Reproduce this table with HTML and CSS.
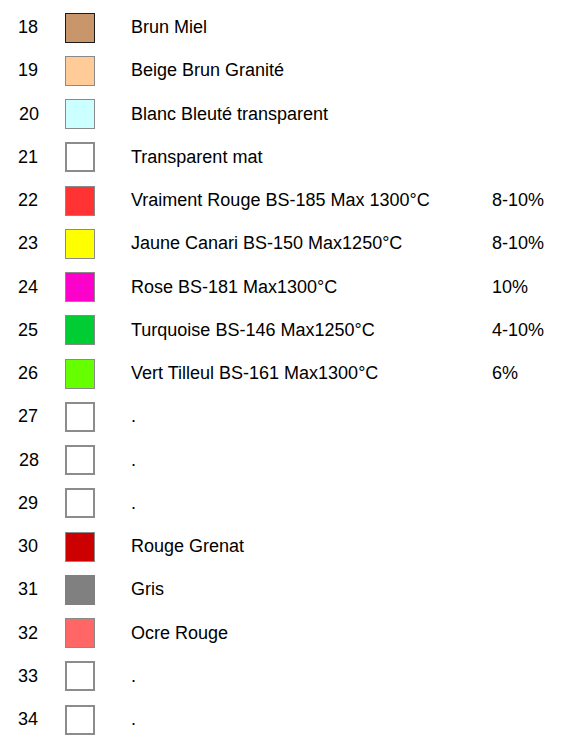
FILE: index.html
```html
<!DOCTYPE html>
<html lang="fr">
<head>
<meta charset="utf-8">
<title>Couleurs</title>
<link rel="stylesheet" href="styles.css">
</head>
<body>
<div class="list">
  <div class="row"><span class="num">18</span><span class="sw c18"></span><span class="name">Brun Miel</span><span class="pct"></span></div>
  <div class="row"><span class="num">19</span><span class="sw c19"></span><span class="name">Beige Brun Granité</span><span class="pct"></span></div>
  <div class="row"><span class="num n-r">20</span><span class="sw c20"></span><span class="name">Blanc Bleuté transparent</span><span class="pct"></span></div>
  <div class="row"><span class="num">21</span><span class="sw empty"></span><span class="name">Transparent mat</span><span class="pct"></span></div>
  <div class="row"><span class="num">22</span><span class="sw c22"></span><span class="name">Vraiment Rouge BS-185 Max 1300°C</span><span class="pct">8-10%</span></div>
  <div class="row"><span class="num">23</span><span class="sw c23"></span><span class="name">Jaune Canari BS-150 Max1250°C</span><span class="pct">8-10%</span></div>
  <div class="row"><span class="num">24</span><span class="sw c24"></span><span class="name">Rose BS-181 Max1300°C</span><span class="pct">10%</span></div>
  <div class="row"><span class="num">25</span><span class="sw c25"></span><span class="name">Turquoise BS-146 Max1250°C</span><span class="pct">4-10%</span></div>
  <div class="row"><span class="num">26</span><span class="sw c26"></span><span class="name">Vert Tilleul BS-161 Max1300°C</span><span class="pct">6%</span></div>
  <div class="row"><span class="num">27</span><span class="sw empty"></span><span class="name">.</span><span class="pct"></span></div>
  <div class="row"><span class="num n-r">28</span><span class="sw empty"></span><span class="name">.</span><span class="pct"></span></div>
  <div class="row"><span class="num">29</span><span class="sw empty"></span><span class="name">.</span><span class="pct"></span></div>
  <div class="row"><span class="num">30</span><span class="sw c30"></span><span class="name">Rouge Grenat</span><span class="pct"></span></div>
  <div class="row"><span class="num">31</span><span class="sw c31"></span><span class="name">Gris</span><span class="pct"></span></div>
  <div class="row"><span class="num">32</span><span class="sw c32"></span><span class="name">Ocre Rouge</span><span class="pct"></span></div>
  <div class="row"><span class="num">33</span><span class="sw empty"></span><span class="name">.</span><span class="pct"></span></div>
  <div class="row"><span class="num">34</span><span class="sw empty"></span><span class="name">.</span><span class="pct"></span></div>
</div>
</body>
</html>
```

FILE: styles.css
```css
html, body {
  margin: 0;
  padding: 0;
  background: #ffffff;
}

body {
  font-family: "Liberation Sans", Arial, sans-serif;
  font-size: 18px;
  color: #000000;
}

.list {
  padding: 6px 0 0 18px;
}

.row {
  display: grid;
  grid-template-columns: 47px 30px 397px auto;
  grid-template-rows: 43.25px;
  align-items: center;
}

.name {
  padding-left: 36px;
}

.n-r {
  padding-left: 1px;
}

.sw {
  box-sizing: border-box;
  width: 30px;
  height: 30px;
  border: 1px solid #8a8a8a;
}

.empty {
  background: #ffffff;
  border: 2px solid #8c8c8c;
}

.c18 { background: #c9966b; border-color: #1a1a1a; }
.c19 { background: #ffcc99; }
.c20 { background: #ccffff; }
.c22 { background: #ff3333; }
.c23 { background: #ffff00; }
.c24 { background: #ff00cc; }
.c25 { background: #00cc33; }
.c26 { background: #66ff00; }
.c30 { background: #cc0000; }
.c31 { background: #808080; border-color: #808080; }
.c32 { background: #ff6666; }
```
